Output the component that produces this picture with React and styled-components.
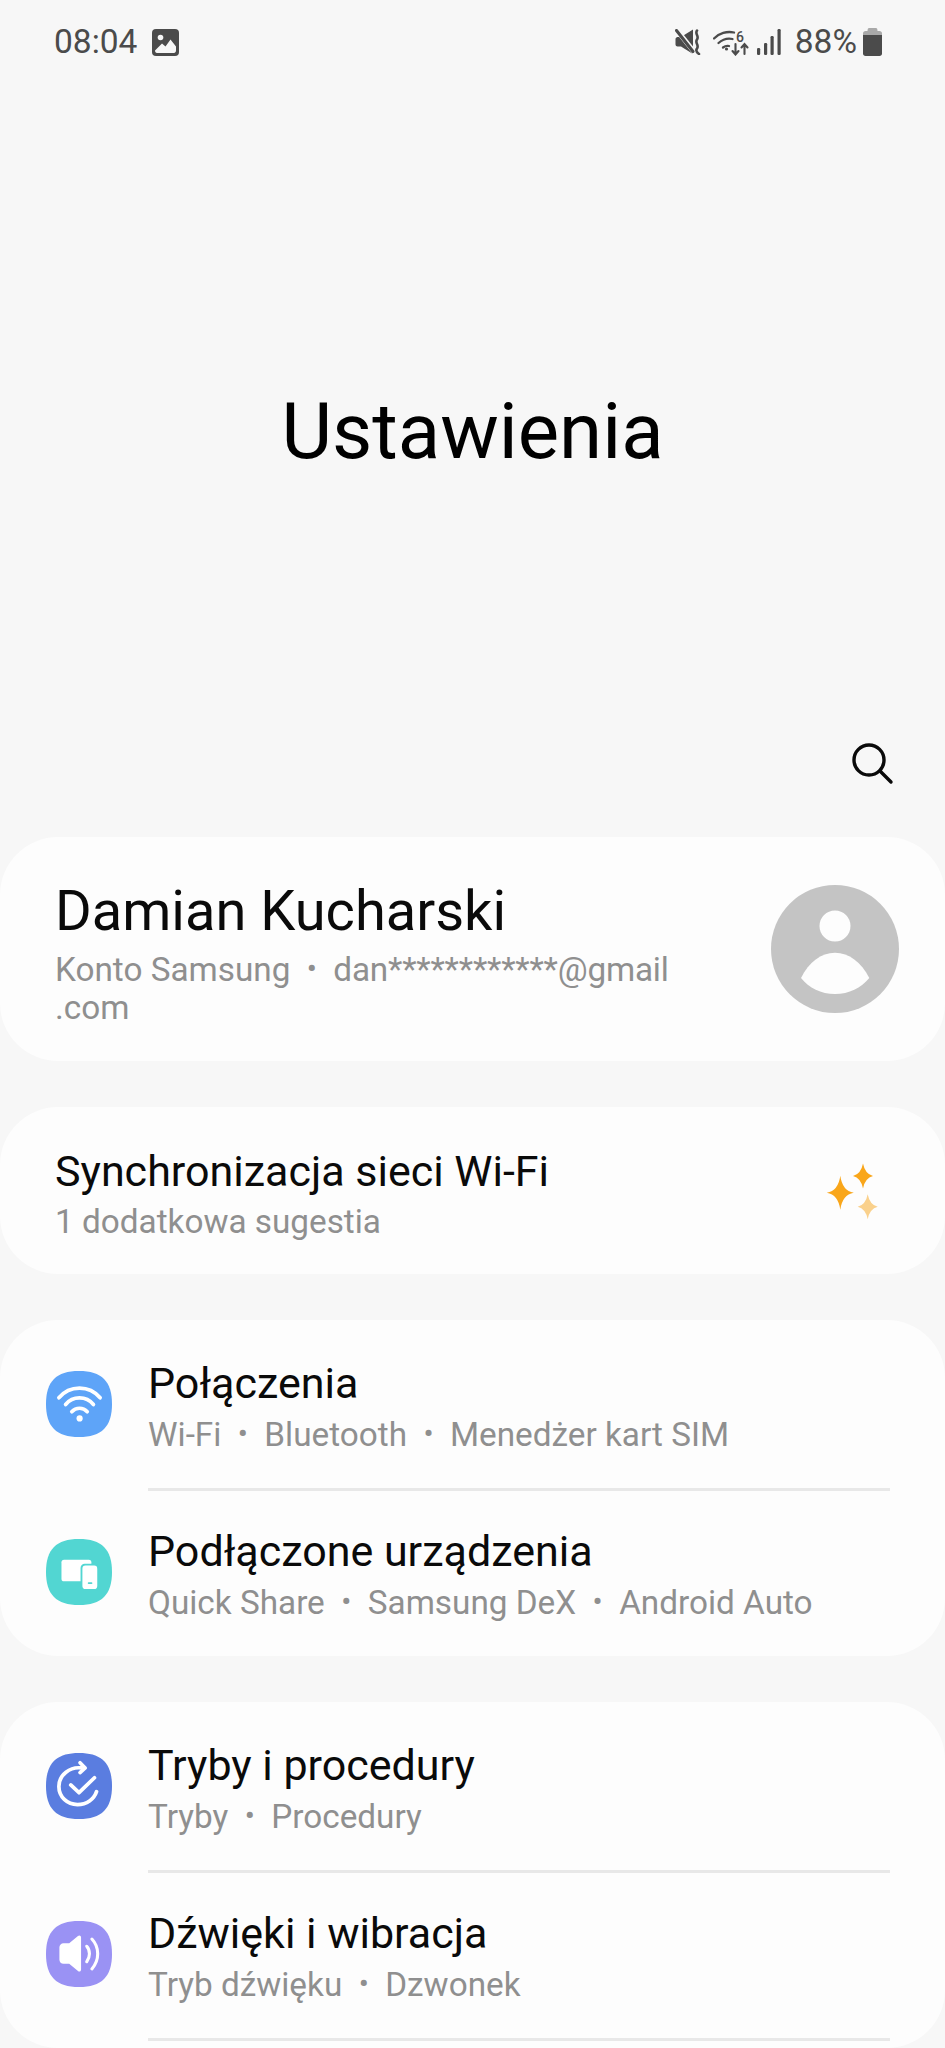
import React from 'react';
import styled, { createGlobalStyle } from 'styled-components';

const GlobalStyle = createGlobalStyle`
  html, body {
    margin: 0;
    padding: 0;
    background: #f7f7f7;
  }
`;

const Page = styled.div`
  width: 945px;
  height: 2048px;
  overflow: hidden;
  background: #f7f7f7;
  font-family: Roboto, sans-serif;
  color: #0a0a0a;
`;

const StatusBar = styled.div`
  height: 84px;
  box-sizing: border-box;
  padding: 0 63px 0 54px;
  display: flex;
  align-items: center;
  justify-content: space-between;
  color: #4b4b4b;
`;

const StatusGroup = styled.div`
  display: flex;
  align-items: center;
`;

const StatusSlot = styled.span`
  display: flex;
  margin-right: ${(p) => p.$gap}px;
`;

const StatusText = styled.span`
  font-size: 33.5px;
  line-height: 40px;
  margin-right: ${(p) => p.$gap}px;
`;

const Hero = styled.div`
  height: 630px;
  box-sizing: border-box;
  padding-top: 64px;
  display: flex;
  align-items: center;
  justify-content: center;
`;

const HeroTitle = styled.h1`
  margin: 0;
  font-size: 78px;
  font-weight: 400;
  color: #000;
`;

const SearchRow = styled.div`
  height: 123px;
  box-sizing: border-box;
  padding: 27px 51px 0 0;
  display: flex;
  justify-content: flex-end;
`;

const Cards = styled.div`
  display: flex;
  flex-direction: column;
  gap: 46px;
`;

const Card = styled.section`
  background: #fdfdfd;
  border-radius: 58px;

  &:last-child {
    padding-bottom: 10px;
  }
`;

const ProfileRow = styled.div`
  height: 224px;
  box-sizing: border-box;
  padding: 0 46px 0 55px;
  display: flex;
  align-items: center;
  justify-content: space-between;
`;

const ProfileText = styled.div`
  margin-top: 5px;
`;

const SuggestRow = styled.div`
  height: 167px;
  box-sizing: border-box;
  padding: 3px 55px 0;
  display: flex;
  align-items: center;
  justify-content: space-between;
`;

const Name = styled.div`
  font-size: 56px;
  line-height: 68px;
`;

const Title = styled.div`
  font-size: 43px;
  line-height: 54px;
`;

const Sub = styled.div`
  font-size: 33.3px;
  line-height: 38px;
  margin-top: 5px;
  color: #8f8f8f;
  white-space: nowrap;
`;

const Dot = styled.span`
  display: inline-block;
  width: 43px;
  text-align: center;
  font-size: 30px;
  vertical-align: 2px;
`;

const Masked = styled.span`
  letter-spacing: -0.2px;
`;

const MenuRow = styled.div`
  height: 168px;
  box-sizing: border-box;
  padding-left: 46px;
  display: flex;
  align-items: center;
  gap: 36px;
`;

const RowBody = styled.div`
  flex: 1;
  height: 100%;
  margin-right: 55px;
  padding-top: 2px;
  box-sizing: border-box;
  display: flex;
  flex-direction: column;
  justify-content: center;
  box-shadow: ${(p) => (p.$divider ? '0 3px 0 #e8e8e8' : 'none')};
`;

const Squircle = ({ color, children }) => (
  <svg width="66" height="66" viewBox="0 0 64 64" style={{ flexShrink: 0 }}>
    <path
      d="M32 0C54 0 64 10 64 32C64 54 54 64 32 64C10 64 0 54 0 32C0 10 10 0 32 0Z"
      fill={color}
    />
    {children}
  </svg>
);

const WifiIcon = () => (
  <Squircle color="#5ea4f8">
    <g fill="none" stroke="#fff" strokeWidth="3.6" strokeLinecap="round">
      <path d="M12.5 26C23 13.5 42 13.5 52.5 26" />
      <path d="M19 32.5C26 24 39 24 46 32.5" />
      <path d="M25 39.5C29 35 36 35 40 39.5" />
    </g>
    <circle cx="32.6" cy="46" r="3" fill="#fff" />
  </Squircle>
);

const DevicesIcon = () => (
  <Squircle color="#52d6d2">
    <rect x="15" y="20" width="29" height="21" rx="2.5" fill="#fff" />
    <rect x="33.5" y="24" width="18" height="26.5" rx="4" fill="#52d6d2" />
    <rect x="35.3" y="25.8" width="14.4" height="22.8" rx="3" fill="#fff" />
    <rect x="40.5" y="42" width="4.5" height="1.6" rx="0.8" fill="#52d6d2" />
  </Squircle>
);

const RoutinesIcon = () => (
  <Squircle color="#5a7de0">
    <g fill="none" stroke="#fff" strokeWidth="3.6" strokeLinecap="round" strokeLinejoin="round">
      <path d="M34.5 14.5C23.5 13 12.5 21 12.5 32.5C12.5 42.5 20.5 50 30.5 50C39.5 50 46.5 45 49 37.5" />
      <path d="M33 9.5L38 14.5L33 19" />
      <path d="M24 31L32 38.5L47 24" />
    </g>
  </Squircle>
);

const SoundIcon = () => (
  <Squircle color="#9a92f4">
    <path
      d="M17 21.5H22.5L31 14.5C32.5 13.4 34 14.2 34 16V47C34 48.8 32.5 49.6 31 48.5L22.5 41.5H17C14.8 41.5 13 39.7 13 37.5V25.5C13 23.3 14.8 21.5 17 21.5Z"
      fill="#fff"
    />
    <g fill="none" stroke="#fff" strokeWidth="3" strokeLinecap="round">
      <path d="M39.5 24.5C43 28.5 43 35 39.5 39.5" />
      <path d="M44.5 17.5C52 25.5 52 38 44.5 46.5" />
    </g>
  </Squircle>
);

const Avatar = () => (
  <svg width="128" height="128" viewBox="0 0 128 128">
    <circle cx="64" cy="64" r="64" fill="#c4c4c4" />
    <circle cx="64" cy="41" r="15.5" fill="#fdfdfd" />
    <path
      d="M30 93C38 77 50 67.7 64 67.7C78 67.7 90 77 98.3 93C90 103 78 109 64 109C50 109 38 103 30 93Z"
      fill="#fdfdfd"
    />
  </svg>
);

const star = (cx, cy, rx, ry) =>
  `M${cx} ${cy - ry}Q${cx + 2} ${cy - 2} ${cx + rx} ${cy}Q${cx + 2} ${cy + 2} ${cx} ${cy + ry}Q${cx - 2} ${cy + 2} ${cx - rx} ${cy}Q${cx - 2} ${cy - 2} ${cx} ${cy - ry}Z`;

const Sparkles = () => (
  <svg width="60" height="60" viewBox="0 0 60 60" style={{ marginRight: 5, marginTop: -3 }}>
    <path d={star(15.3, 31.7, 13.5, 17)} fill="#f9a61a" />
    <path d={star(38, 15, 10, 12.5)} fill="#f9a61a" />
    <path d={star(42.7, 45.7, 10, 12.5)} fill="#fad18c" />
  </svg>
);

const SearchIcon = () => (
  <svg width="44" height="44" viewBox="0 0 44 44" fill="none" stroke="#0a0a0a" strokeWidth="3.4" strokeLinecap="round">
    <circle cx="19" cy="19" r="15" />
    <path d="M30 30L41 41" />
  </svg>
);

const PictureIcon = () => (
  <svg width="27" height="27" viewBox="0 0 27 27">
    <rect width="27" height="27" rx="4" fill="#4b4b4b" />
    <circle cx="8.5" cy="8.5" r="2.8" fill="#f7f7f7" />
    <path d="M3 21.5L10 14.5L13.5 17.5L18.5 10.5L24 17.5V21.5C24 23 23 24 22 24H5C3.8 24 3 23 3 21.5Z" fill="#f7f7f7" />
  </svg>
);

const MuteIcon = () => (
  <svg width="26" height="26" viewBox="0 0 26 26">
    <path d="M0.5 10C0.5 9 1.5 8 2.5 8H6L18 0.5V25L6 17.5H2.5C1.5 17.5 0.5 16.5 0.5 15.5Z" fill="#4b4b4b" />
    <path d="M1 0L20 24" stroke="#f7f7f7" strokeWidth="5" />
    <path d="M1.5 1.5L18 22.5" stroke="#4b4b4b" strokeWidth="3" strokeLinecap="round" />
    <path d="M22 1.5C19.5 5 24.5 7 22 10.5C19.5 14 24.5 16 22 19.5C20.5 21.5 22 23.5 24 25" fill="none" stroke="#4b4b4b" strokeWidth="2.6" strokeLinecap="round" />
  </svg>
);

const WifiStatusIcon = () => (
  <svg width="37" height="27" viewBox="0 0 37 27" fill="none" stroke="#4b4b4b" strokeWidth="2.3" strokeLinecap="round">
    <path d="M1 9.5C6 4 14 2 21 3.5" />
    <path d="M5.5 14C10 10 15 9 19.5 10" />
    <path d="M10 18.5C12 17 14 16.5 16 17" />
    <circle cx="13.5" cy="20" r="1.6" fill="#4b4b4b" stroke="none" />
    <path d="M22.5 15V25M19.5 22L22.5 25.5L25.5 22" strokeWidth="2.1" />
    <path d="M31.5 25V15.5M28.5 18.5L31.5 15L34.5 18.5" strokeWidth="2.1" />
    <text x="23" y="12.5" fontFamily="Roboto, sans-serif" fontSize="14" fontWeight="500" fill="#4b4b4b" stroke="none">6</text>
  </svg>
);

const SignalIcon = () => (
  <svg width="24" height="26" viewBox="0 0 24 26" fill="#4b4b4b">
    <rect x="0" y="19" width="3.2" height="7" rx="1.2" />
    <rect x="7" y="14" width="3.2" height="12" rx="1.2" />
    <rect x="13.5" y="7" width="3.2" height="19" rx="1.2" />
    <rect x="20.5" y="0" width="3.2" height="26" rx="1.2" />
  </svg>
);

const BatteryIcon = () => (
  <svg width="19" height="28" viewBox="0 0 19 28">
    <path d="M6 0H13C14 0 14.5 1 14.5 3H4.5C4.5 1 5 0 6 0Z" fill="#a9a9a9" />
    <path d="M2.5 3H16.5C18 3 19 4 19 5.5V7H0V5.5C0 4 1 3 2.5 3Z" fill="#a9a9a9" />
    <path d="M0 7H19V25.5C19 27 18 28 16.5 28H2.5C1 28 0 27 0 25.5Z" fill="#4b4b4b" />
  </svg>
);

const Separated = ({ items }) =>
  items.map((item, i) => (
    <React.Fragment key={i}>
      {i > 0 && <Dot>•</Dot>}
      {item}
    </React.Fragment>
  ));

const rows = [
  [
    { icon: <WifiIcon />, title: 'Połączenia', sub: ['Wi-Fi', 'Bluetooth', 'Menedżer kart SIM'], divider: true },
    { icon: <DevicesIcon />, title: 'Podłączone urządzenia', sub: ['Quick Share', 'Samsung DeX', 'Android Auto'] },
  ],
  [
    { icon: <RoutinesIcon />, title: 'Tryby i procedury', sub: ['Tryby', 'Procedury'], divider: true },
    { icon: <SoundIcon />, title: 'Dźwięki i wibracja', sub: ['Tryb dźwięku', 'Dzwonek'], divider: true },
  ],
];

export default function App() {
  return (
    <Page>
      <GlobalStyle />
      <StatusBar>
        <StatusGroup>
          <StatusText $gap={15}>08:04</StatusText>
          <PictureIcon />
        </StatusGroup>
        <StatusGroup>
          <StatusSlot $gap={12}><MuteIcon /></StatusSlot>
          <StatusSlot $gap={7}><WifiStatusIcon /></StatusSlot>
          <StatusSlot $gap={14}><SignalIcon /></StatusSlot>
          <StatusText $gap={6}>88%</StatusText>
          <BatteryIcon />
        </StatusGroup>
      </StatusBar>
      <Hero>
        <HeroTitle>Ustawienia</HeroTitle>
      </Hero>
      <SearchRow>
        <SearchIcon />
      </SearchRow>
      <Cards>
        <Card>
          <ProfileRow>
            <ProfileText>
              <Name>Damian Kucharski</Name>
              <Sub>
                <Separated items={['Konto Samsung', <Masked>dan************@gmail</Masked>]} />
                <br />
                .com
              </Sub>
            </ProfileText>
            <Avatar />
          </ProfileRow>
        </Card>
        <Card>
          <SuggestRow>
            <div>
              <Title>Synchronizacja sieci Wi-Fi</Title>
              <Sub>1 dodatkowa sugestia</Sub>
            </div>
            <Sparkles />
          </SuggestRow>
        </Card>
        {rows.map((group) => (
          <Card key={group[0].title}>
            {group.map((row) => (
              <MenuRow key={row.title}>
                {row.icon}
                <RowBody $divider={row.divider}>
                  <Title>{row.title}</Title>
                  <Sub>
                    <Separated items={row.sub} />
                  </Sub>
                </RowBody>
              </MenuRow>
            ))}
          </Card>
        ))}
      </Cards>
    </Page>
  );
}
